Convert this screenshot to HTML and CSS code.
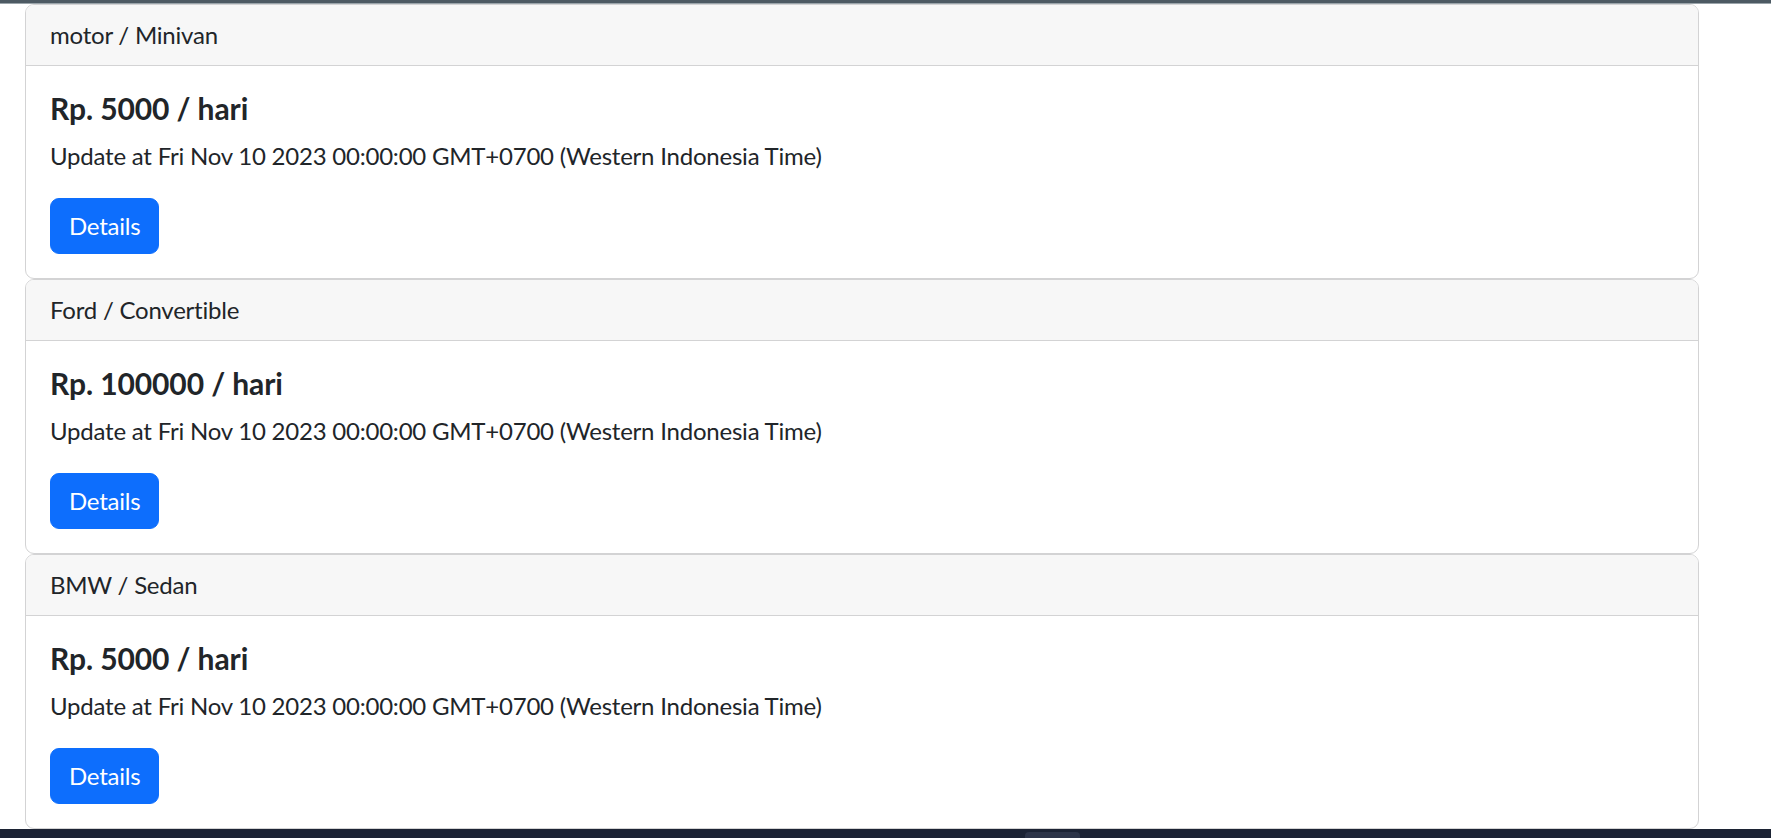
FILE: index.html
```html
<!DOCTYPE html>
<html lang="id">
<head>
<meta charset="utf-8">
<title>Daftar Mobil</title>
<link rel="stylesheet" href="styles.css">
</head>
<body>
<div class="top-strip"></div>
<main class="list">
  <div class="card">
    <div class="card-header">motor / Minivan</div>
    <div class="card-body">
      <h5 class="card-title">Rp. 5000 / hari</h5>
      <p class="card-text">Update at Fri Nov 10 2023 00:00:00 GMT+0700 (Western Indonesia Time)</p>
      <a class="btn" href="#">Details</a>
    </div>
  </div>
  <div class="card">
    <div class="card-header">Ford / Convertible</div>
    <div class="card-body">
      <h5 class="card-title">Rp. 100000 / hari</h5>
      <p class="card-text">Update at Fri Nov 10 2023 00:00:00 GMT+0700 (Western Indonesia Time)</p>
      <a class="btn" href="#">Details</a>
    </div>
  </div>
  <div class="card">
    <div class="card-header">BMW / Sedan</div>
    <div class="card-body">
      <h5 class="card-title">Rp. 5000 / hari</h5>
      <p class="card-text">Update at Fri Nov 10 2023 00:00:00 GMT+0700 (Western Indonesia Time)</p>
      <a class="btn" href="#">Details</a>
    </div>
  </div>
</main>
<div class="taskbar"><span class="task-tab"></span></div>
</body>
</html>
```
FILE: styles.css
```css
html, body {
  margin: 0;
  padding: 0;
  height: 100%;
  overflow: hidden;
}
body {
  font-family: Lato, "Segoe UI", sans-serif;
  font-size: 24px;
  letter-spacing: -0.22px;
  line-height: 36px;
  color: #212529;
  background: #fff;
  display: flex;
  flex-direction: column;
}
.top-strip {
  height: 3px;
  background: #4d5a63;
  border-bottom: 1px solid #9aa4aa;
  flex: none;
}
.list {
  flex: 1;
  padding-left: 25px;
  width: 1674px;
  display: flex;
  flex-direction: column;
}
.card {
  border: 1px solid #d3d3d4;
  border-radius: 9px;
  background: #fff;
  overflow: hidden;
  flex: none;
}
.card-header {
  background: #f7f7f7;
  border-bottom: 1px solid #d3d3d4;
  padding: 12px 24px;
  line-height: 36px;
}
.card-body {
  padding: 24px;
}
.card-title {
  margin: 0 0 12px;
  font-size: 30px;
  line-height: 36px;
  font-weight: 700;
  letter-spacing: -0.1px;
}
.card-text {
  margin: 0 0 24px;
}
.btn {
  display: inline-block;
  box-sizing: border-box;
  height: 56px;
  padding: 9px 18px;
  border: 1px solid #0d6efd;
  border-radius: 9px;
  background: #0d6efd;
  color: #fff;
  text-decoration: none;
  line-height: 36px;
  vertical-align: top;
}
.taskbar {
  flex: none;
  height: 9px;
  background: #1c2334;
  position: relative;
}
.task-tab {
  position: absolute;
  left: 1025px;
  top: 3px;
  width: 55px;
  height: 6px;
  border-radius: 4px 4px 0 0;
  background: #2d3448;
}
```
